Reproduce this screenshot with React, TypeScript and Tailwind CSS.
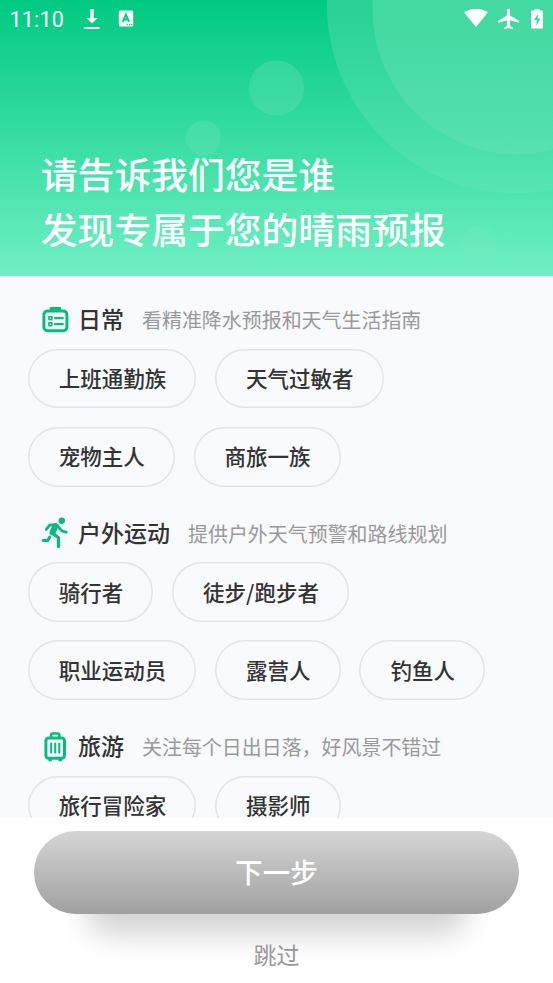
import React from "react";

const green = "#06bd7e";

function DailyIcon() {
  return (
    <svg width="28" height="28" viewBox="-0.500 0.200 28 28" fill="none" stroke={green}>
      <rect x="2.4" y="5.2" width="23" height="19.8" rx="3.6" strokeWidth="3" />
      <path d="M8.2 5V2.400a1.3 1.3 0 0 1 1.3-1.3h8.8a1.3 1.3 0 0 1 1.3 1.3V5z" fill={green} stroke="none" />
      <rect x="7.5" y="10.9" width="2.8" height="2.8" strokeWidth="1.6" />
      <rect x="7.5" y="17" width="2.8" height="2.8" strokeWidth="1.6" />
      <path d="M13.5 12.3h7.8M13.5 18.4h7.8" strokeWidth="2.200" strokeLinecap="round" />
    </svg>
  );
}

function RunIcon() {
  return (
    <svg width="28" height="32" viewBox="0 0 28 32" fill="none" stroke={green} strokeLinecap="round" strokeLinejoin="round">
      <circle cx="20.8" cy="3.700" r="3.2" fill={green} stroke="none" />
      <path d="M5.300 12.300L8.700 8H15" strokeWidth="2.8" />
      <path d="M14.500 9L11.500 15.500" strokeWidth="6" />
      <path d="M16.500 8.800l4.300 5 4.400 1.300" strokeWidth="2.8" />
      <path d="M12 16.500l5.500 4.300v8.700" strokeWidth="3.300" />
      <path d="M8.800 20l-2.200 3.600H2.100" strokeWidth="3" />
    </svg>
  );
}

function TravelIcon() {
  return (
    <svg width="28" height="32" viewBox="-0.500 0.600 28 32" fill="none" stroke={green}>
      <rect x="4.4" y="7.5" width="18.6" height="20.4" rx="2.8" strokeWidth="3" />
      <path d="M9.6 7V4.6a1.5 1.5 0 0 1 1.5-1.5h5.2a1.5 1.5 0 0 1 1.5 1.5V7" strokeWidth="2.6" />
      <path d="M9.6 12.3v10.8M13.7 12.3v10.8M17.8 12.3v10.8" strokeWidth="2" />
      <path d="M8.7 28v2.8M18.7 28v2.8" strokeWidth="3.4" />
    </svg>
  );
}

const sections = [
  {
    title: "日常",
    desc: "看精准降水预报和天气生活指南",
    icon: <DailyIcon />,
    rows: [["上班通勤族", "天气过敏者"], ["宠物主人", "商旅一族"]],
  },
  {
    title: "户外运动",
    desc: "提供户外天气预警和路线规划",
    icon: <RunIcon />,
    rows: [["骑行者", "徒步/跑步者"], ["职业运动员", "露营人", "钓鱼人"]],
  },
  {
    title: "旅游",
    desc: "关注每个日出日落，好风景不错过",
    icon: <TravelIcon />,
    rows: [["旅行冒险家", "摄影师"]],
  },
];

function StatusBar() {
  return (
    <div className="flex h-[38px] items-center pl-[9.500px] pr-[10px] text-white">
      <span className="pt-[1px] font-[Roboto] text-[21.5px] leading-none tracking-[0.200px]">11:10</span>
      <svg className="ml-[20px]" width="16" height="22" viewBox="0 0 16 22" fill="currentColor">
        <path d="M6.3 1h3.4v9h4L8 15.6 2.3 10h4zM.5 19h15v2H.5z" />
      </svg>
      <svg className="ml-[17.500px]" width="16" height="18" viewBox="0 .5 16 18">
        <rect x=".8" y="1" width="14.4" height="16" rx="1.5" fill="#fff" />
        <path d="M4.8 12.3L7.9 5l3.1 7.3M5.9 10h4" fill="none" stroke="#08cb87" strokeWidth="2" />
        <path d="M8.5 15.2h1.3M11 15.2h1.3M13.2 15.2h1.2" stroke="#08cb87" strokeWidth="1.3" />
      </svg>
      <svg className="ml-auto" width="24" height="20" viewBox="0 1 24 20" fill="currentColor">
        <path d="M12 19L.2 4.4C3.3 2.2 7.2 .8 12 .8s8.700 1.400 11.800 3.600z" />
      </svg>
      <svg className="ml-[10px]" width="21" height="21" viewBox="2 2.800 20 20" fill="currentColor">
        <path d="M22 16v-2l-8.500-5V3.500a1.500 1.500 0 0 0-3 0V9L2 14v2l8.500-2.500V19L8 20.500V22l4-1 4 1v-1.500L13.500 19v-5.500z" />
      </svg>
      <svg className="ml-[12px]" width="12" height="20" viewBox="0 1 12 20">
        <path d="M3.500 2.500V1h5v1.500H11a1 1 0 0 1 1 1v16a1 1 0 0 1-1 1H1a1 1 0 0 1-1-1V3.500a1 1 0 0 1 1-1z" fill="#fff" />
        <path d="M7.400 5.500L2.800 12h2.700V18L9.400 10.500H6.800z" fill="#44dba5" />
      </svg>
    </div>
  );
}

export default function App() {
  return (
    <div className="flex h-[983px] w-[553px] flex-col overflow-hidden bg-white font-['Noto_Sans_CJK_SC',sans-serif]">
      <header className="relative h-[276px] shrink-0 overflow-hidden bg-linear-to-b/srgb from-[#00ca82] to-[#6ff0c4]">
        <svg className="absolute inset-0" width="553" height="276" fill="#fff">
          <defs>
            <linearGradient id="haze" x1="0" y1="0" x2="0" y2="276" gradientUnits="userSpaceOnUse">
              <stop offset="0" stopColor="#8ce8c2" stopOpacity=".28" />
              <stop offset="1" stopColor="#8ce8c2" stopOpacity=".1" />
            </linearGradient>
          </defs>
          <g fill="url(#haze)">
            <circle cx="515.500" cy="4.500" r="188.500" />
            <circle cx="516.500" cy="10" r="144" />
            <circle cx="276.500" cy="88" r="27.500" />
            <circle cx="203.500" cy="138" r="17.500" />
            <circle cx="479.500" cy="243.500" r="17.500" />
          </g>
        </svg>
        <div className="relative">
          <StatusBar />
          <h1 className="mt-[108px] pl-[40.800px] text-[36.800px] leading-[55px] font-medium text-white">
            请告诉我们您是谁
            <br />
            发现专属于您的晴雨预报
          </h1>
        </div>
      </header>

      <main className="h-[542px] shrink-0 overflow-hidden bg-[#f9fafc] pl-[27.700px] pt-[15px]">
        {sections.map((s) => (
          <section key={s.title} className="mb-[18px]">
            <div className="flex h-[57.500px] items-center pl-[13.300px]">
              <span className="flex w-[28px] shrink-0 justify-center">{s.icon}</span>
              <h2 className="ml-[9px] pb-[2px] text-[23px] leading-none font-medium text-[#333]">{s.title}</h2>
              <p className="ml-[18px] pt-[1px] text-[19.970px] leading-none text-[#999]">{s.desc}</p>
            </div>
            <div className="flex flex-col gap-[18.500px]">
              {s.rows.map((row) => (
                <div key={row[0]} className="flex gap-[18.700px]">
                  {row.map((label) => (
                    <button
                      key={label}
                      className="h-[59.800px] rounded-full pr-[30.200px] pb-[1.200px] pl-[31px] text-[21.500px] leading-none font-medium whitespace-nowrap text-[#333] shadow-[inset_0_0_0_1.500px_#e3e4e6]"
                    >
                      {label}
                    </button>
                  ))}
                </div>
              ))}
            </div>
          </section>
        ))}
      </main>

      <footer className="flex flex-1 flex-col items-center bg-white pt-[13px]">
        <div className="relative shrink-0">
          <div className="absolute inset-x-[52px] top-[30px] bottom-[-21px] rounded-[24px] bg-black/17 blur-[14px]" />
          <button className="relative block h-[83px] w-[485px] rounded-full bg-linear-to-b/srgb from-[#d5d5d5] to-[#a0a0a0] pb-[2px] text-[27.600px] leading-none font-medium text-white">
            下一步
          </button>
        </div>
        <button className="relative mt-[27px] text-[23px] leading-[26px] text-[#999]">跳过</button>
      </footer>
    </div>
  );
}
